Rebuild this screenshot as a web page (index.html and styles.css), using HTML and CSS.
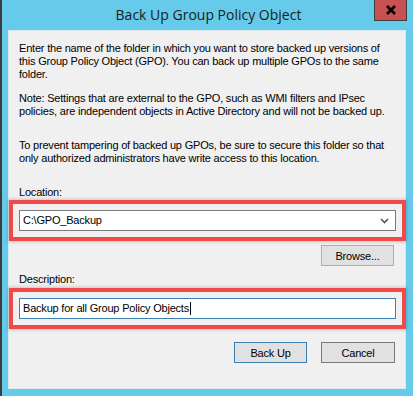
FILE: index.html
```html
<!DOCTYPE html>
<html lang="en">
<head>
    <meta charset="UTF-8">
    <title>Back Up Group Policy Object</title>
    <link rel="stylesheet" href="styles.css">
</head>
<body>
    <div class="window">
        <div class="titlebar">
            <span></span>
            <h1>Back Up Group Policy Object</h1>
            <div class="close-btn">
                <svg width="12" height="10" viewBox="0 0 12 10">
                    <path d="M2 1 L10 9 M10 1 L2 9" stroke="#000" stroke-width="2.6" fill="none"/>
                </svg>
            </div>
        </div>

        <div class="panel">
            <p class="intro">Enter the name of the folder in which you want to store backed up versions of this Group Policy Object (GPO). You can back up multiple GPOs to the same folder.</p>
            <p class="note">Note: Settings that are external to the GPO, such as WMI filters and IPsec policies, are independent objects in Active Directory and will not be backed up.</p>
            <p class="warn">To prevent tampering of backed up GPOs, be sure to secure this folder so that only authorized administrators have write access to this location.</p>

            <label class="field-label">Location:</label>
            <div class="field combo highlight">
                <span>C:\GPO_Backup</span>
                <svg class="chevron" width="9" height="6" viewBox="0 0 9 6">
                    <path d="M1 1 L4.5 4.5 L8 1" stroke="#555" stroke-width="1.6" fill="none"/>
                </svg>
            </div>
            <div class="browse-row">
                <button class="btn">Browse...</button>
            </div>

            <label class="field-label desc-label">Description:</label>
            <div class="field focused highlight">
                <span>Backup for all Group Policy Objects</span><span class="caret"></span>
            </div>

            <div class="actions">
                <button class="btn default">Back Up</button>
                <button class="btn cancel">Cancel</button>
            </div>
        </div>
    </div>
</body>
</html>
```

FILE: styles.css
```css
* {
    margin: 0;
    padding: 0;
    box-sizing: border-box;
}
body {
    background-color: #66cbea;
    font-family: "Liberation Sans", Arial, sans-serif;
    font-size: 11px;
    letter-spacing: -0.2px;
    color: #000;
}

.window {
    width: 413px;
    height: 396px;
    border-left: 2px solid #3c3c3c;
    background-color: #66cbea;
    display: flex;
    flex-direction: column;
}

.titlebar {
    height: 30px;
    display: grid;
    grid-template-columns: 1fr auto 1fr;
}
.titlebar h1 {
    font-family: "Open Sans", "Noto Sans", sans-serif;
    font-weight: normal;
    font-size: 14px;
    letter-spacing: 0;
    line-height: 30px;
    color: #1b1b1b;
    margin-left: 2px;
}
.close-btn {
    justify-self: end;
    margin-right: 6px;
    width: 33px;
    height: 21px;
    background-color: #c75050;
    border: 1px solid #3f3f3f;
    border-top: none;
    display: flex;
    align-items: center;
    justify-content: center;
}

.panel {
    margin: 0 7px 0 6px;
    height: 359px;
    background-color: #f0f0f0;
    border: 1px solid #dbe9ee;
    padding: 11px 9px 0 10px;
    display: flex;
    flex-direction: column;
}
.panel p {
    line-height: 13px;
}
.note {
    margin-top: 11px;
}
.warn {
    margin-top: 21px;
}

.field-label {
    display: block;
    line-height: 13px;
    margin-top: 21px;
}
.desc-label {
    margin-top: 7px;
}

.field {
    height: 21px;
    margin-top: 11px;
    background-color: #fff;
    border: 1px solid #7a7a7a;
    display: flex;
    align-items: center;
    padding: 0 3px;
    line-height: 13px;
}
.field.focused {
    border-color: #3c7fb1;
    margin-top: 12px;
}
.highlight {
    box-shadow: 0 0 0 6px #f0f0f0, 0 0 0 10px #f04a4a, 0 0 3px 11px rgba(0, 0, 0, 0.18);
}
.combo {
    justify-content: space-between;
}
.chevron {
    margin-right: 3px;
}
.caret {
    display: inline-block;
    width: 1px;
    height: 13px;
    background-color: #000;
    margin-left: 1px;
}

.browse-row {
    display: flex;
    justify-content: flex-end;
    margin-top: 14px;
    padding-right: 2px;
}

.btn {
    width: 73px;
    height: 21px;
    background-color: #e1e1e1;
    border: 1px solid #adadad;
    font-family: "Liberation Sans", Arial, sans-serif;
    font-size: 11px;
    letter-spacing: -0.2px;
    color: #000;
}
.btn.default {
    border-color: #3c7fb1;
}
.btn.cancel {
    border-color: #7a7a7a;
    width: 74px;
}

.actions {
    display: flex;
    justify-content: flex-end;
    gap: 14px;
    margin-top: 23px;
    padding-right: 1px;
}
```
